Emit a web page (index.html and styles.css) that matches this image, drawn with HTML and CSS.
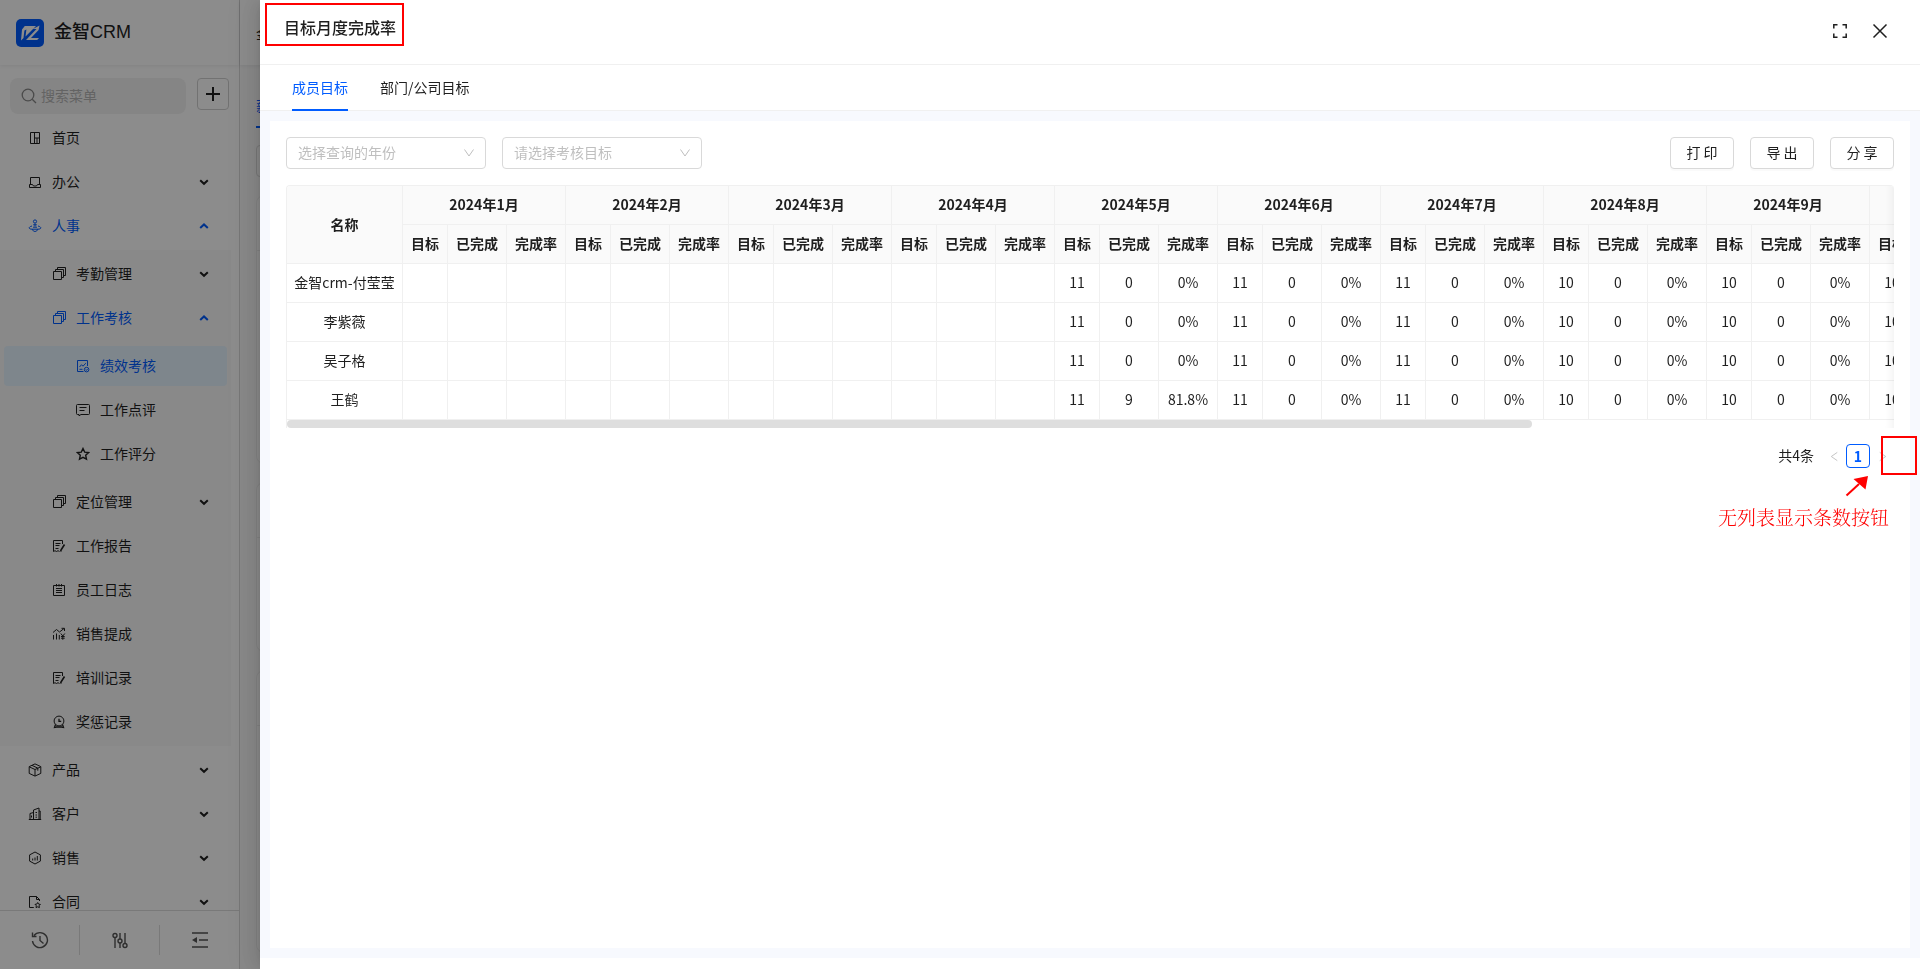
FILE: index.html
```html
<!DOCTYPE html>
<html lang="zh-CN">
<head>
<meta charset="utf-8">
<meta name="viewport" content="width=device-width, initial-scale=1">
<title>金智CRM</title>
<link rel="stylesheet" href="styles.css">
</head>
<body>
<svg class="sprite" aria-hidden="true">
  <symbol id="i-down" viewBox="0 0 10 10"><path d="M1.2 3.2 5 6.8 8.8 3.2" stroke-width="2"/></symbol>
  <symbol id="i-up" viewBox="0 0 10 10"><path d="M1.2 7 5 3.4 8.8 7" stroke-width="2"/></symbol>
  <symbol id="i-home" viewBox="0 0 14 14"><path d="M2.500 1.500h9v11h-9zM6.500 1.500v11M6.500 7h5M9 7v5.500"/></symbol>
  <symbol id="i-office" viewBox="0 0 14 14"><path d="M2.500 9V2.500h9V9M1.500 12.500V9.500h3l1 1.500h3l1-1.500h3v3z"/></symbol>
  <symbol id="i-hr" viewBox="0 0 14 14"><circle cx="7" cy="2.500" r="1.600"/><path d="M7 4.500v3M5.200 5.800h3.600M4 7c-4 1-3.500 3.200 0 3.200h6c3.500 0 4-2.200 0-3.200M4.500 10.200c0 3 5 3 5 0M5 8.200h4"/></symbol>
  <symbol id="i-copy" viewBox="0 0 14 14"><path d="M1.500 4.500h8v8h-8zM3.500 4.500v-2h8v8h-2M5.500 2.500v-2h8v8h-2"/></symbol>
  <symbol id="i-perf" viewBox="0 0 14 14"><path d="M7.500 12.500H1.500v-11h10V7M3.500 8l2-2.300 1.500 1.500 2.800-3M3.500 10.300h3"/><circle cx="10.600" cy="10.600" r="2.300"/><path d="M9.700 10.600l.7.800 1.200-1.400"/></symbol>
  <symbol id="i-comment" viewBox="0 0 14 14"><path d="M1.500 1.500h11q1 0 1 1v8q0 1-1 1H5l-2 1.300v-1.300H1.500q-1 0-1-1v-8q0-1 1-1zM3.500 4.500h7M3.500 7.500h5"/></symbol>
  <symbol id="i-star" viewBox="0 0 14 14"><path d="M7 1.500l1.700 3.600 3.900.5-2.900 2.700.8 3.900L7 10.300l-3.500 1.900.8-3.900L1.400 5.600l3.900-.5z" stroke-width="1.400"/></symbol>
  <symbol id="i-report" viewBox="0 0 14 14"><path d="M10.500 5V1.500h-9v11l1.500-.8 1.500.8 1.500-.8 1.500.8M3.500 4.500h5M3.500 6.500h4M3.500 9.500h3"/><path d="M12.500 5.500 9 11l-.3 1.500" stroke-width="1.600"/></symbol>
  <symbol id="i-diary" viewBox="0 0 14 14"><path d="M1.500 2.500h11v10h-11zM4.500 1v2.500M7 1v2.500M9.500 1v2.500M4 5.500h6M4 7.500h6M4 9.500h6"/></symbol>
  <symbol id="i-sales" viewBox="0 0 14 14"><path d="M1 5.500l3.500-3 3 2.500L12 1.500M9.500 1.300H12.500V4M1.500 8v4.500M4.500 6.500v6M7.300 8v4.500M8.800 6.500l2 2.500 2-2.500M10.800 9v3.800M9 9.500h3.700M9 11.200h3.700"/></symbol>
  <symbol id="i-medal" viewBox="0 0 14 14"><circle cx="7" cy="6" r="4.900"/><path d="M7 3.800V6.300h2.200M3.500 9.500l-1 3 2.200-.3M10.500 9.500l1 3-2.200-.3M4 12h6" stroke-width="1.300"/></symbol>
  <symbol id="i-box" viewBox="0 0 14 14"><path d="M7 .9 12.800 3.600v6.800L7 13.100 1.200 10.400V3.600zM1.200 3.800 7 6.500l5.800-2.700M7 6.500v6.500M4 2.400l5.800 2.700M9.800 5.100v2.600"/></symbol>
  <symbol id="i-cust" viewBox="0 0 14 14"><path d="M.8 12.500h12.400M2 12.500V6.500l3.500-1v7M5.500 12.500V3l5.500-2v11.500M7.500 5.500h1.500M7.500 8h1.500M7.500 10.200h1.500M3.500 8.500v2M11 4h1.200v8.500"/></symbol>
  <symbol id="i-hex" viewBox="0 0 14 14"><path d="M7 1 12.400 3.900v6.200L7 13 1.600 10.100V3.900zM4.700 9.500V7.500M7 9.500V6.500M9.300 9.500V5"/></symbol>
  <symbol id="i-contract" viewBox="0 0 14 14"><path d="M5.800 12.500H1.500V1.500h7l3 3V6M8.500 1.500v3h3M9.700 7.500l.9 1.600 1.800.3-1.300 1.300.3 1.900-1.700-.8-1.700.8.3-1.900-1.300-1.300 1.800-.3z"/></symbol>
  <symbol id="i-chev" viewBox="0 0 12 12"><path d="M1.500 2.500 6 9l4.500-6.500"/></symbol>
</svg>

<div class="app">
  <aside class="sidebar">
    <div class="brand">
      <svg class="logo" viewBox="0 0 28 28" aria-hidden="true"><rect width="28" height="28" rx="5" fill="#005cff"/><path d="M5 21.500 6 10.500 8.800 7H20L9.500 17.500l.9-7-2 1L7.500 19zM10 21 20.500 10H17l6.500-3.500-.9 4.500-7.600 8H23l-1.800 2z" fill="#fff"/></svg>
      <span class="brand-name">金智CRM</span>
    </div>
    <div class="search-row">
      <label class="search">
        <svg class="search-icon" viewBox="0 0 16 16" aria-hidden="true"><circle cx="7" cy="7" r="5.800"/><path d="M11.200 11.200 15 15"/></svg>
        <input type="text" placeholder="搜索菜单" aria-label="搜索菜单">
      </label>
      <button class="add" type="button" aria-label="新增"><svg viewBox="0 0 14 14"><path d="M7 0v14M0 7h14"/></svg></button>
    </div>
    <nav class="menu-wrap">
      <ul class="menu">
        <li><a class="item" href="#"><svg><use href="#i-home"/></svg><span>首页</span></a></li>
        <li><a class="item" href="#"><svg><use href="#i-office"/></svg><span>办公</span><svg class="arrow"><use href="#i-down"/></svg></a></li>
        <li><a class="item active" href="#"><svg><use href="#i-hr"/></svg><span>人事</span><svg class="arrow"><use href="#i-up"/></svg></a>
          <ul class="menu sub">
            <li><a class="item" href="#"><svg><use href="#i-copy"/></svg><span>考勤管理</span><svg class="arrow"><use href="#i-down"/></svg></a></li>
            <li><a class="item active" href="#"><svg><use href="#i-copy"/></svg><span>工作考核</span><svg class="arrow"><use href="#i-up"/></svg></a>
              <ul class="menu sub deep">
                <li><a class="item active selected" href="#"><svg><use href="#i-perf"/></svg><span>绩效考核</span></a></li>
                <li><a class="item" href="#"><svg><use href="#i-comment"/></svg><span>工作点评</span></a></li>
                <li><a class="item" href="#"><svg><use href="#i-star"/></svg><span>工作评分</span></a></li>
              </ul>
            </li>
            <li><a class="item" href="#"><svg><use href="#i-copy"/></svg><span>定位管理</span><svg class="arrow"><use href="#i-down"/></svg></a></li>
            <li><a class="item" href="#"><svg><use href="#i-report"/></svg><span>工作报告</span></a></li>
            <li><a class="item" href="#"><svg><use href="#i-diary"/></svg><span>员工日志</span></a></li>
            <li><a class="item" href="#"><svg><use href="#i-sales"/></svg><span>销售提成</span></a></li>
            <li><a class="item" href="#"><svg><use href="#i-report"/></svg><span>培训记录</span></a></li>
            <li><a class="item" href="#"><svg><use href="#i-medal"/></svg><span>奖惩记录</span></a></li>
          </ul>
        </li>
        <li><a class="item" href="#"><svg><use href="#i-box"/></svg><span>产品</span><svg class="arrow"><use href="#i-down"/></svg></a></li>
        <li><a class="item" href="#"><svg><use href="#i-cust"/></svg><span>客户</span><svg class="arrow"><use href="#i-down"/></svg></a></li>
        <li><a class="item" href="#"><svg><use href="#i-hex"/></svg><span>销售</span><svg class="arrow"><use href="#i-down"/></svg></a></li>
        <li><a class="item" href="#"><svg><use href="#i-contract"/></svg><span>合同</span><svg class="arrow"><use href="#i-down"/></svg></a></li>
      </ul>
    </nav>
    <div class="side-foot">
      <button type="button" aria-label="历史"><svg viewBox="0 0 18 18"><path d="M3 4.500A7.500 7.500 0 1 1 1.500 10M1.500 1.500v4h4M9 5v4.500l3.500 3"/></svg></button>
      <button type="button" aria-label="设置"><svg viewBox="0 0 18 18"><path d="M4 6.500V17M9 2v6M9 12v5M14 2v10"/><circle cx="4" cy="4.500" r="2"/><circle cx="9" cy="10" r="2"/><circle cx="14" cy="14.500" r="2"/></svg></button>
      <button type="button" aria-label="收起"><svg viewBox="0 0 18 18"><path d="M1 2h16M8 9h9M1 16h16"/><path d="M6 6v6L1 9z" fill="currentColor" stroke="none"/></svg></button>
    </div>
  </aside>
  <main class="page">
    <div class="page-head">金智CRM</div>
    <div class="page-tab"><span>薪酬绩效</span></div>
    <div class="page-filter"></div>
    <div class="page-card first"><i></i></div>
    <div class="page-card second"><i></i></div>
    <div class="page-card third"><i></i></div>
  </main>
</div>
<div class="mask"></div>

<section class="drawer" role="dialog" aria-labelledby="drawer-title">
  <header class="drawer-head">
    <h1 class="drawer-title" id="drawer-title">目标月度完成率</h1>
    <div class="drawer-tools">
      <button type="button" aria-label="全屏"><svg viewBox="0 0 16 16"><path d="M1.800 5.500V1.800h3.700M10.500 1.800h3.700v3.700M14.200 10.500v3.700h-3.700M5.500 14.200H1.800v-3.700"/></svg></button>
      <button type="button" aria-label="关闭"><svg viewBox="0 0 16 16"><path d="M1.500 1.500l13 13M14.500 1.500l-13 13"/></svg></button>
    </div>
  </header>
  <div class="tabs" role="tablist">
    <button class="tab on" type="button" role="tab" aria-selected="true">成员目标</button>
    <button class="tab" type="button" role="tab" aria-selected="false">部门/公司目标</button>
  </div>
  <div class="drawer-body">
    <div class="card">
      <div class="toolbar">
        <div class="picker"><select aria-label="选择查询的年份"><option>选择查询的年份</option></select><svg><use href="#i-chev"/></svg></div>
        <div class="picker"><select aria-label="请选择考核目标"><option>请选择考核目标</option></select><svg><use href="#i-chev"/></svg></div>
        <div class="actions">
          <button class="btn" type="button">打 印</button>
          <button class="btn" type="button">导 出</button>
          <button class="btn" type="button">分 享</button>
        </div>
      </div>
      <div class="table-box">
        <div class="table-scroll">
          <table class="grid">
            <colgroup><col class="c-name"></colgroup>
            <colgroup><col class="c-goal"><col class="c-num"><col class="c-num"><col class="c-goal"><col class="c-num"><col class="c-num"><col class="c-goal"><col class="c-num"><col class="c-num"><col class="c-goal"><col class="c-num"><col class="c-num"><col class="c-goal"><col class="c-num"><col class="c-num"><col class="c-goal"><col class="c-num"><col class="c-num"><col class="c-goal"><col class="c-num"><col class="c-num"><col class="c-goal"><col class="c-num"><col class="c-num"><col class="c-goal"><col class="c-num"><col class="c-num"><col class="c-goal"><col class="c-num"><col class="c-num"></colgroup>
            <thead>
              <tr><th rowspan="2">名称</th><th colspan="3">2024年1月</th><th colspan="3">2024年2月</th><th colspan="3">2024年3月</th><th colspan="3">2024年4月</th><th colspan="3">2024年5月</th><th colspan="3">2024年6月</th><th colspan="3">2024年7月</th><th colspan="3">2024年8月</th><th colspan="3">2024年9月</th><th colspan="3"></th></tr>
              <tr><th>目标</th><th>已完成</th><th>完成率</th><th>目标</th><th>已完成</th><th>完成率</th><th>目标</th><th>已完成</th><th>完成率</th><th>目标</th><th>已完成</th><th>完成率</th><th>目标</th><th>已完成</th><th>完成率</th><th>目标</th><th>已完成</th><th>完成率</th><th>目标</th><th>已完成</th><th>完成率</th><th>目标</th><th>已完成</th><th>完成率</th><th>目标</th><th>已完成</th><th>完成率</th><th>目标</th><th></th><th></th></tr>
            </thead>
            <tbody>
              <tr><td>金智crm-付莹莹</td><td></td><td></td><td></td><td></td><td></td><td></td><td></td><td></td><td></td><td></td><td></td><td></td><td>11</td><td>0</td><td>0%</td><td>11</td><td>0</td><td>0%</td><td>11</td><td>0</td><td>0%</td><td>10</td><td>0</td><td>0%</td><td>10</td><td>0</td><td>0%</td><td>10</td><td></td><td></td></tr>
              <tr><td>李紫薇</td><td></td><td></td><td></td><td></td><td></td><td></td><td></td><td></td><td></td><td></td><td></td><td></td><td>11</td><td>0</td><td>0%</td><td>11</td><td>0</td><td>0%</td><td>11</td><td>0</td><td>0%</td><td>10</td><td>0</td><td>0%</td><td>10</td><td>0</td><td>0%</td><td>10</td><td></td><td></td></tr>
              <tr><td>吴子格</td><td></td><td></td><td></td><td></td><td></td><td></td><td></td><td></td><td></td><td></td><td></td><td></td><td>11</td><td>0</td><td>0%</td><td>11</td><td>0</td><td>0%</td><td>11</td><td>0</td><td>0%</td><td>10</td><td>0</td><td>0%</td><td>10</td><td>0</td><td>0%</td><td>10</td><td></td><td></td></tr>
              <tr><td>王鹤</td><td></td><td></td><td></td><td></td><td></td><td></td><td></td><td></td><td></td><td></td><td></td><td></td><td>11</td><td>9</td><td>81.8%</td><td>11</td><td>0</td><td>0%</td><td>11</td><td>0</td><td>0%</td><td>10</td><td>0</td><td>0%</td><td>10</td><td>0</td><td>0%</td><td>10</td><td></td><td></td></tr>
            </tbody>
          </table>
        </div>
        <div class="scrollbar"><div class="thumb"></div></div>
      </div>
      <div class="pager">
        <span class="total">共4条</span>
        <button class="turn" type="button" aria-label="上一页"><svg viewBox="0 0 12 12"><path d="M9 1.500 2.500 6 9 10.500"/></svg></button>
        <button class="num" type="button">1</button>
        <button class="turn" type="button" aria-label="下一页"><svg viewBox="0 0 12 12"><path d="M3 1.500 9.500 6 3 10.500"/></svg></button>
      </div>
    </div>
  </div>
</section>

<div class="mark mark-title"></div>
<div class="mark mark-page"></div>
<svg class="mark-arrow" viewBox="0 0 24 22" aria-hidden="true"><path d="M1.500 20.500 14 9" stroke="#f00" stroke-width="2"/><path d="M23 1 8.500 4 20.500 14.500z" fill="#f00"/></svg>
<p class="mark-note">无列表显示条数按钮</p>
</body>
</html>
```
FILE: styles.css
```css
* { box-sizing: border-box; }
html, body { height: 100%; }
body {
  margin: 0;
  overflow: hidden;
  background: #fff;
  color: #1f1f1f;
  font: 14px/22px "Noto Sans CJK SC", sans-serif;
}
button, input, select { font: inherit; color: inherit; }
button { padding: 0; border: 0; background: none; }
ul { margin: 0; padding: 0; list-style: none; }
svg { display: block; fill: none; stroke: currentColor; }
.sprite { position: absolute; width: 0; height: 0; }

.app { display: flex; height: 100%; }
.sidebar {
  display: flex;
  flex-direction: column;
  flex: none;
  width: 240px;
  border-right: 1px solid #d8d8d8;
}
.brand {
  display: flex;
  align-items: center;
  gap: 10px;
  flex: none;
  height: 65px;
  padding-left: 16px;
  box-shadow: 0 1px 4px rgba(0, 21, 41, .08);
}
.logo { width: 28px; height: 28px; stroke: none; }
.brand-name {
  padding-bottom: 2px;
  font-family: "Liberation Sans", "Noto Sans CJK SC", sans-serif;
  font-size: 18px;
  font-weight: 500;
  line-height: 28px;
}
.search-row { display: flex; gap: 11px; flex: none; padding: 13px 10px 0; }
.search {
  display: flex;
  align-items: center;
  gap: 4px;
  flex: 1;
  min-width: 0;
  height: 36px;
  padding: 0 11px;
  border-radius: 8px;
  background: #f3f3f3;
  color: #888;
}
.search-icon { flex: none; width: 16px; height: 16px; stroke-width: 1.3; }
.search input { width: 100%; min-width: 0; padding: 0 0 2px; border: 0; background: none; outline: 0; }
.search input::placeholder { color: #b5b5b5; }
.add {
  display: grid;
  place-items: center;
  width: 32px;
  height: 32px;
  border: 1px solid #d0d0d0;
  border-radius: 4px;
}
.add svg { width: 14px; height: 14px; stroke-width: 2; }

.menu-wrap { flex: 1; min-height: 0; overflow: hidden; padding-right: 8px; }
.menu { display: flow-root; }
.menu > li { margin: 4px 0; }
.item {
  display: flex;
  align-items: center;
  gap: 10px;
  height: 40px;
  margin: 0 4px;
  padding: 0 18px 0 24px;
  border-radius: 4px;
  color: inherit;
  text-decoration: none;
}
.item svg { flex: none; width: 14px; height: 14px; }
.item span { flex: 1; padding-bottom: 2px; }
.item .arrow { width: 10px; height: 10px; }
.active { color: #005cff; }
.selected { background: #e6f4ff; }
.sub { margin-top: 4px; background: #fafafa; }
.sub .item { padding-left: 48px; }
.deep .item { padding-left: 72px; }
.menu > li:has(> .sub) { margin-bottom: 0; }

.side-foot {
  display: flex;
  align-items: center;
  flex: none;
  height: 59px;
  border-top: 1px solid #ddd;
}
.side-foot button {
  display: grid;
  place-items: center;
  flex: 1;
  height: 30px;
  color: #555;
}
.side-foot button + button { border-left: 1px solid #ddd; }
.side-foot svg { width: 18px; height: 18px; stroke-width: 1.4; }

.page { flex: 1; min-width: 0; padding-left: 16px; background: #fafafa; }
.page-head { height: 65px; margin-left: -16px; padding: 22px 0 0 16px; background: #fff; box-shadow: 0 1px 4px rgba(0, 21, 41, .08); }
.page-tab { height: 80px; padding-top: 29px; color: #005cff; }
.page-tab span { display: inline-block; height: 34px; border-bottom: 2px solid #005cff; }
.page-filter { width: 200px; height: 32px; border: 1px solid #d9d9d9; border-radius: 4px; }
.page-card { margin-top: 18px; border: 1px solid #eee; border-radius: 8px; background: #fff; }
.page-card i { display: block; height: 55px; border-bottom: 1px solid #eee; }
.first { height: 269px; }
.second { height: 170px; }
.third { height: 283px; }

.mask { position: fixed; inset: 0; background: rgba(0, 0, 0, .45); }

.drawer {
  position: fixed;
  inset: 0 0 0 260px;
  display: flex;
  flex-direction: column;
  padding-bottom: 11px;
  background: #fff;
  box-shadow: -6px 0 16px rgba(0, 0, 0, .08), -3px 0 6px -4px rgba(0, 0, 0, .12), -9px 0 28px 8px rgba(0, 0, 0, .05);
}
.drawer-head {
  display: flex;
  justify-content: space-between;
  flex: none;
  height: 65px;
  padding: 15px 32px 0 24px;
  border-bottom: 1px solid #f0f0f0;
}
.drawer-title { margin: 0; font-size: 16px; font-weight: 500; line-height: 24px; }
.drawer-tools { display: flex; gap: 24px; height: 32px; align-items: center; }
.drawer-tools svg { width: 16px; height: 16px; stroke-width: 1.5; }
.tabs { display: flex; gap: 32px; flex: none; height: 46px; padding-left: 32px; border-bottom: 1px solid #f0f0f0; }
.tab { height: 46px; border-bottom: 2px solid transparent; }
.tab.on { color: #005cff; border-color: #005cff; }
.drawer-body { flex: 1; min-height: 0; padding: 10px; background: #f7f9fe; }
.card { height: 100%; padding: 16px; background: #fff; }

.toolbar { display: flex; gap: 16px; }
.picker { position: relative; width: 200px; }
.picker select {
  width: 100%;
  height: 32px;
  padding: 0 30px 2px 11px;
  border: 1px solid #d9d9d9;
  border-radius: 4px;
  background: #fff;
  color: #bfbfbf;
  appearance: none;
}
.picker svg { position: absolute; top: 10px; right: 11px; width: 12px; height: 12px; color: #bfbfbf; pointer-events: none; }
.actions { display: flex; gap: 16px; margin-left: auto; }
.btn {
  width: 64px;
  height: 32px;
  padding-bottom: 2px;
  border: 1px solid #d9d9d9;
  border-radius: 4px;
  background: #fff;
  box-shadow: 0 2px 0 rgba(0, 0, 0, .02);
}

.table-box {
  position: relative;
  margin-top: 16px;
  border-top: 1px solid #f0f0f0;
  border-left: 1px solid #f0f0f0;
  border-radius: 4px 4px 0 0;
  overflow: hidden;
}
.table-box::after {
  content: "";
  position: absolute;
  inset: 0 0 0 auto;
  width: 30px;
  box-shadow: inset -10px 0 8px -8px rgba(5, 5, 5, .06);
  pointer-events: none;
}
.table-scroll { overflow-x: auto; scrollbar-width: none; }
.scrollbar { height: 8px; }
.thumb { width: 77.5%; height: 8px; border-radius: 4px; background: #dedede; }
.grid { width: 1746px; table-layout: fixed; border-collapse: separate; border-spacing: 0; text-align: center; }
.c-name { width: 116px; }
.c-goal { width: 45px; }
.c-num { width: 59px; }
.grid th, .grid td {
  height: 39px;
  padding: 0 0 2px;
  border-right: 1px solid #f0f0f0;
  border-bottom: 1px solid #f0f0f0;
  white-space: nowrap;
}
.grid th { background: #fafafa; font-weight: 600; }

.pager { display: flex; align-items: center; justify-content: flex-end; margin-top: 16px; }
.total { margin-right: 8px; padding-bottom: 2px; }
.turn, .num { display: grid; place-items: center; width: 24px; height: 24px; }
.turn { color: #bfbfbf; }
.turn svg { width: 11px; height: 11px; }
.num { border: 1px solid #005cff; border-radius: 4px; color: #005cff; font-weight: 600; }

.mark { position: fixed; border: 2px solid #f00; }
.mark-title { top: 3px; left: 265px; width: 139px; height: 43px; }
.mark-page { top: 436px; right: 3px; width: 36px; height: 39px; }
.mark-arrow { position: fixed; top: 475px; right: 51px; width: 24px; height: 22px; stroke: none; }
.mark-note {
  position: fixed;
  top: 503px;
  right: 31px;
  margin: 0;
  color: #f00;
  font-family: "Noto Serif CJK SC", "Noto Sans CJK SC", serif;
  font-size: 19px;
  font-weight: 300;
  line-height: 28px;
}
```
